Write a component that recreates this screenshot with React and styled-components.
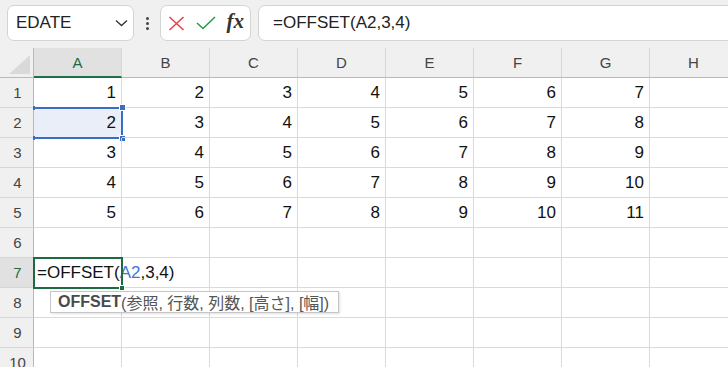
import {Fragment} from "react";
import styled, {createGlobalStyle} from "styled-components";

const GlobalStyle = createGlobalStyle`
    html, body {
        margin: 0;
        padding: 0;
        background: #fff;
    }
    body {
        font-family: "Liberation Sans", "Noto Sans CJK JP", sans-serif;
        overflow: hidden;
    }
`

const COLUMNS = ['A', 'B', 'C', 'D', 'E', 'F', 'G', 'H']
const ROWS = 10

const Window = styled.div`
    width: 728px;
    height: 367px;
    overflow: hidden;
    display: flex;
    flex-direction: column;
    background: #fff;
`

const Toolbar = styled.div`
    flex: none;
    height: 48px;
    box-sizing: border-box;
    padding: 5px 0 0 7px;
    display: flex;
    align-items: flex-start;
    background: #f0f0f0;
    overflow: hidden;
`

const Box = styled.div`
    box-sizing: border-box;
    height: 36px;
    background: #fff;
    border: 1px solid #d4d4d4;
    border-radius: 7px;
    display: flex;
    align-items: center;
`

const NameBox = styled(Box)`
    flex: none;
    width: 127px;
    padding: 0 5px 0 8px;
    justify-content: space-between;
    font-size: 17px;
    color: #222;
`

const Dots = styled.div`
    flex: none;
    width: 26px;
    height: 36px;
    display: flex;
    flex-direction: column;
    align-items: center;
    justify-content: center;
    gap: 2px;

    & > span {
        width: 3px;
        height: 3px;
        border-radius: 50%;
        background: #444;
    }
`

const ActionBox = styled(Box)`
    flex: none;
    width: 91px;
    padding: 0 6px 0 7px;
    justify-content: space-between;
`

const FxLabel = styled.span`
    font-family: "Liberation Serif", serif;
    font-style: italic;
    font-weight: bold;
    font-size: 21px;
    color: #333;
    line-height: 1;
    margin-top: -3px;
`

const FormulaBar = styled(Box)`
    flex: none;
    width: 500px;
    margin-left: 7px;
    padding-left: 14px;
    font-size: 17px;
    color: #222;
`

const Sheet = styled.div`
    position: relative;
    display: grid;
    grid-template-columns: 34px repeat(8, 88px);
    grid-auto-rows: 30px;
    background: #fff;
`

const Corner = styled.div`
    background: #f0f0f0;
    border-right: 1px solid #b9b9b9;
    border-bottom: 1px solid #b9b9b9;
    display: flex;
    align-items: flex-end;
    justify-content: flex-end;
    padding: 0 3px 3px 0;
    box-sizing: border-box;
`

const ColHead = styled.div`
    box-sizing: border-box;
    background: ${p => p.$active ? '#e1e1e1' : '#f0f0f0'};
    color: ${p => p.$active ? '#1d6b41' : '#444'};
    border-right: 1px solid #d6d6d6;
    border-bottom: ${p => p.$active ? '2px solid #1e7145' : '1px solid #b9b9b9'};
    font-size: 15px;
    display: flex;
    align-items: center;
    justify-content: center;
`

const RowHead = styled.div`
    box-sizing: border-box;
    background: ${p => p.$active ? '#e1e1e1' : '#f0f0f0'};
    color: ${p => p.$active ? '#1d6b41' : '#444'};
    border-right: 1px solid #b9b9b9;
    border-bottom: 1px solid #d6d6d6;
    font-size: 15px;
    display: flex;
    align-items: center;
    justify-content: center;
    padding-left: 2px;
`

const Cell = styled.div`
    position: relative;
    box-sizing: border-box;
    border-right: 1px solid #dadada;
    border-bottom: 1px solid #dadada;
    background: ${p => p.$selected ? '#e9eef8' : 'transparent'};
    font-size: 17px;
    color: #111;
    display: flex;
    align-items: center;
    justify-content: ${p => p.$left ? 'flex-start' : 'flex-end'};
    padding: ${p => p.$left ? '0 0 0 3px' : '0 5px 0 0'};
    white-space: nowrap;
    z-index: ${p => p.$active ? 2 : 'auto'};
`

const CellFrame = styled.span`
    position: absolute;
    top: -1px;
    left: -1px;
    right: -2px;
    bottom: -2px;
    box-sizing: border-box;
    border: 2px solid ${p => p.$color};
    border-left-color: ${p => p.$noLeft ? 'transparent' : p.$color};
    pointer-events: none;
`

const Handle = styled.span`
    position: absolute;
    width: ${p => p.$w}px;
    height: ${p => p.$h}px;
    background: ${p => p.$color};
    box-shadow: ${p => p.$ring ? '0 0 0 1px #fff' : 'none'};
`

const RefText = styled.span`
    color: #4474d4;
`

const Tooltip = styled.div`
    position: absolute;
    left: 50px;
    top: 243px;
    width: 289px;
    height: 22px;
    box-sizing: border-box;
    background: #fff;
    border: 1px solid #c6c6c6;
    box-shadow: 1px 1px 2px rgba(0, 0, 0, 0.12);
    padding-left: 7px;
    display: flex;
    align-items: center;
    font-size: 16px;
    color: #555;
    white-space: nowrap;
    z-index: 3;

    & b {
        color: #4a4a4a;
    }
`

const DATA = [
    [1, 2, 3, 4, 5, 6, 7],
    [2, 3, 4, 5, 6, 7, 8],
    [3, 4, 5, 6, 7, 8, 9],
    [4, 5, 6, 7, 8, 9, 10],
    [5, 6, 7, 8, 9, 10, 11],
]

function SelectionHandles() {
    const blue = '#3b6cc6'
    return (
        <>
            <CellFrame $color={blue} $noLeft/>
            <Handle $color={blue} $w={2} $h={4} style={{left: -1, top: -2}}/>
            <Handle $color={blue} $w={2} $h={4} style={{left: -1, bottom: -3}}/>
            <Handle $color={blue} $w={5} $h={5} $ring style={{right: -4, top: -3}}/>
            <Handle $color={blue} $w={5} $h={5} $ring style={{right: -4, bottom: -4}}/>
        </>
    )
}

function ActiveFrame() {
    const green = '#1e6b3f'
    return (
        <>
            <CellFrame $color={green}/>
            <Handle $color={green} $w={4} $h={4} $ring style={{right: -3, bottom: -3}}/>
        </>
    )
}

function renderCell(row, colIndex) {
    const key = `${COLUMNS[colIndex]}${row}`
    const value = DATA[row - 1] ? DATA[row - 1][colIndex] : undefined

    if (row === 2 && colIndex === 0) {
        return (
            <Cell key={key} $selected>
                {value}
                <SelectionHandles/>
            </Cell>
        )
    }
    if (row === 7 && colIndex === 0) {
        return (
            <Cell key={key} $left $active>
                =OFFSET(<RefText>A2</RefText>,3,4)
                <ActiveFrame/>
            </Cell>
        )
    }
    return <Cell key={key}>{value}</Cell>
}

export default function App() {
    const rows = Array.from({length: ROWS}, (_, i) => i + 1)

    return (
        <Window>
            <GlobalStyle/>
            <Toolbar>
                <NameBox>
                    EDATE
                    <svg width="13" height="8" viewBox="0 0 13 8">
                        <polyline points="1,1.5 6.5,6.5 12,1.5" fill="none" stroke="#333" strokeWidth="1.3"/>
                    </svg>
                </NameBox>
                <Dots><span/><span/><span/></Dots>
                <ActionBox>
                    <svg width="17" height="15" viewBox="0 0 17 15">
                        <path d="M1.5 1 L15.5 14 M15.5 1 L1.5 14" stroke="#e0484d" strokeWidth="1.6" fill="none"/>
                    </svg>
                    <svg width="20" height="14" viewBox="0 0 20 14">
                        <polyline points="1,7 7,12.5 19,1" fill="none" stroke="#2e9a4d" strokeWidth="1.6"/>
                    </svg>
                    <FxLabel>fx</FxLabel>
                </ActionBox>
                <FormulaBar>=OFFSET(A2,3,4)</FormulaBar>
            </Toolbar>

            <Sheet>
                <Corner>
                    <svg width="21" height="19" viewBox="0 0 21 19">
                        <polygon points="21,0 21,19 0,19" fill="#d9d9d9"/>
                    </svg>
                </Corner>
                {COLUMNS.map(c => <ColHead key={c} $active={c === 'A'}>{c}</ColHead>)}

                {rows.map(row => (
                    <Fragment key={`r${row}`}>
                        <RowHead $active={row === 7}>{row}</RowHead>
                        {COLUMNS.map((_, ci) => renderCell(row, ci))}
                    </Fragment>
                ))}

                <Tooltip>
                    <b>OFFSET</b>(参照, 行数, 列数, [高さ], [幅])
                </Tooltip>
            </Sheet>
        </Window>
    )
}
